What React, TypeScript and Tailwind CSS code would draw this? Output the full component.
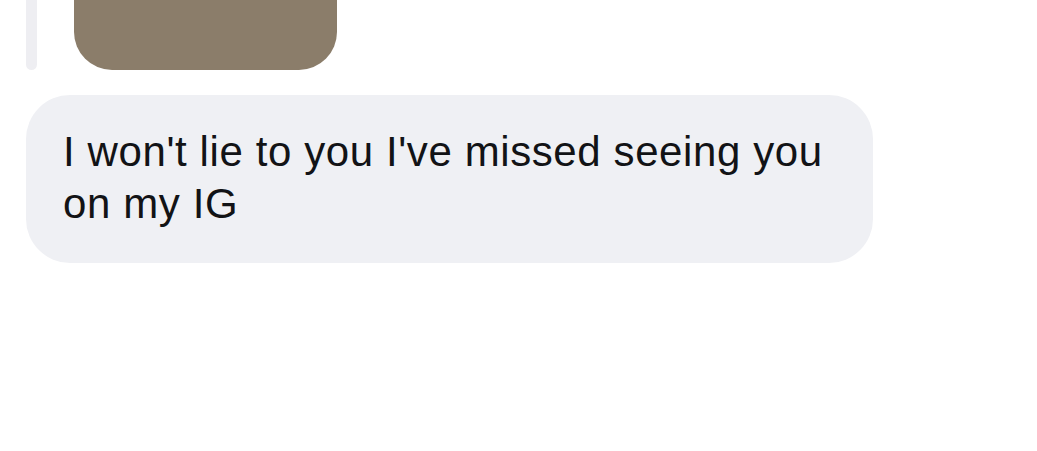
export default function App() {
  return (
    <div className="w-[1037px] h-[451px] bg-white overflow-hidden font-['Liberation_Sans',Arial,sans-serif]">
      {/* previous photo message with reply bar */}
      <div className="flex items-end h-[70px] pl-[26px]">
        <div className="w-[11px] h-full bg-[#eeeef2] rounded-b-full"></div>
        <div className="ml-[37px] w-[263px] h-full bg-[#8b7d6a] rounded-b-[38px]"></div>
      </div>

      {/* received message bubble */}
      <div className="mt-[25px] ml-[26px] w-[847px] h-[168px] bg-[#eff0f4] rounded-[44px] pl-[37px] pr-[30px] pt-[31px]">
        <p className="text-[42px] leading-[52px] text-[#121316] tracking-[0.6px]">
          I won't lie to you I've missed seeing you on my IG
        </p>
      </div>
    </div>
  );
}
